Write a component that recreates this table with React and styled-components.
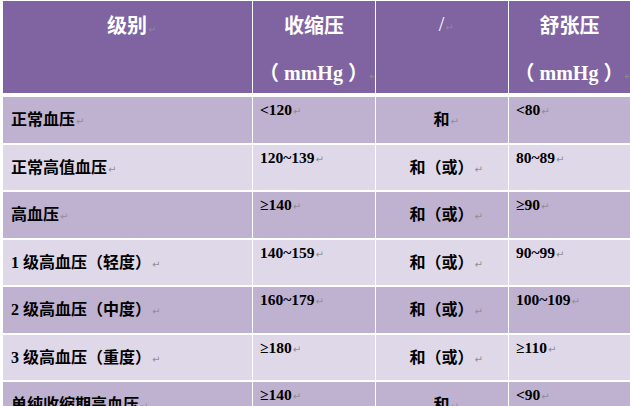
import React from "react";
import styled, { createGlobalStyle } from "styled-components";

const Global = createGlobalStyle`
  html, body { margin: 0; padding: 0; background: #ffffff; }
  body { width: 630px; height: 406px; overflow: hidden; }
`;

const Page = styled.div`
  width: 630px;
  height: 406px;
  overflow: hidden;
  padding: 1px 0 0 3px;
  box-sizing: border-box;
  background: #ffffff;
  font-family: "Liberation Serif", "Noto Sans CJK SC", serif;
`;

const Table = styled.div`
  display: flex;
  flex-direction: column;
  gap: 4px;
`;

const Body = styled.div`
  display: flex;
  flex-direction: column;
  gap: 2px;
`;

const Row = styled.div`
  display: grid;
  grid-template-columns: 249px 122px 132px 1fr;
  column-gap: 1px;
  height: ${(p) => (p.$head ? "92px" : "45.5px")};
`;

const HeadCell = styled.div`
  background: #8064a2;
  color: #ffffff;
  display: flex;
  flex-direction: column;
  overflow: hidden;
`;

const HeadLine = styled.div`
  height: 47px;
  flex: none;
  display: flex;
  align-items: center;
  justify-content: center;
  font-size: 20px;
  font-weight: ${(p) => (p.$thin ? 400 : 700)};
  white-space: nowrap;
`;

const Cell = styled.div`
  background: ${(p) => (p.$band ? "#bfb1d0" : "#dfd8e8")};
  color: #000000;
  font-size: ${(p) => (p.$kind === "num" ? "15.5px" : "16px")};
  font-weight: 700;
  display: flex;
  white-space: nowrap;
  overflow: hidden;
  align-items: ${(p) => (p.$kind === "num" ? "flex-start" : "center")};
  justify-content: ${(p) => (p.$kind === "mid" ? "center" : "flex-start")};
  padding: ${(p) =>
    p.$kind === "num" ? "4px 0 0 7px" : p.$kind === "label" ? "2px 0 0 8px" : "2px 0 0 0"};
  line-height: 17px;
`;

const Mark = styled.span`
  display: inline-block;
  width: 0;
  overflow: visible;
  white-space: nowrap;
  font-family: "DejaVu Sans", sans-serif;
  font-weight: 400;
  font-size: 10px;
  color: ${(p) => (p.$head ? "#8a8a8a" : "#8f8f8f")};
  vertical-align: baseline;
  padding-left: 1px;
`;

const Text = ({ children, head }) => (
  <span>
    {children}
    <Mark $head={head}>↵</Mark>
  </span>
);

const rows = [
  ["正常血压", "<120", "和", "<80"],
  ["正常高值血压", "120~139", "和（或）", "80~89"],
  ["高血压", "≥140", "和（或）", "≥90"],
  ["1 级高血压（轻度）", "140~159", "和（或）", "90~99"],
  ["2 级高血压（中度）", "160~179", "和（或）", "100~109"],
  ["3 级高血压（重度）", "≥180", "和（或）", "≥110"],
  ["单纯收缩期高血压", "≥140", "和", "<90"],
];

export default function App() {
  return (
    <>
      <Global />
      <Page>
        <Table>
          <Row $head>
            <HeadCell>
              <HeadLine>
                <Text head>级别</Text>
              </HeadLine>
            </HeadCell>
            <HeadCell>
              <HeadLine>收缩压</HeadLine>
              <HeadLine>
                <Text head>（ mmHg ）</Text>
              </HeadLine>
            </HeadCell>
            <HeadCell>
              <HeadLine $thin>
                <Text head>/</Text>
              </HeadLine>
            </HeadCell>
            <HeadCell>
              <HeadLine>舒张压</HeadLine>
              <HeadLine>
                <Text head>（ mmHg ）</Text>
              </HeadLine>
            </HeadCell>
          </Row>
          <Body>
            {rows.map((r, i) => {
              const band = i % 2 === 0;
              return (
                <Row key={i}>
                  <Cell $band={band} $kind="label">
                    <Text>{r[0]}</Text>
                  </Cell>
                  <Cell $band={band} $kind="num">
                    <Text>{r[1]}</Text>
                  </Cell>
                  <Cell $band={band} $kind="mid">
                    <Text>{r[2]}</Text>
                  </Cell>
                  <Cell $band={band} $kind="num">
                    <Text>{r[3]}</Text>
                  </Cell>
                </Row>
              );
            })}
          </Body>
        </Table>
      </Page>
    </>
  );
}
